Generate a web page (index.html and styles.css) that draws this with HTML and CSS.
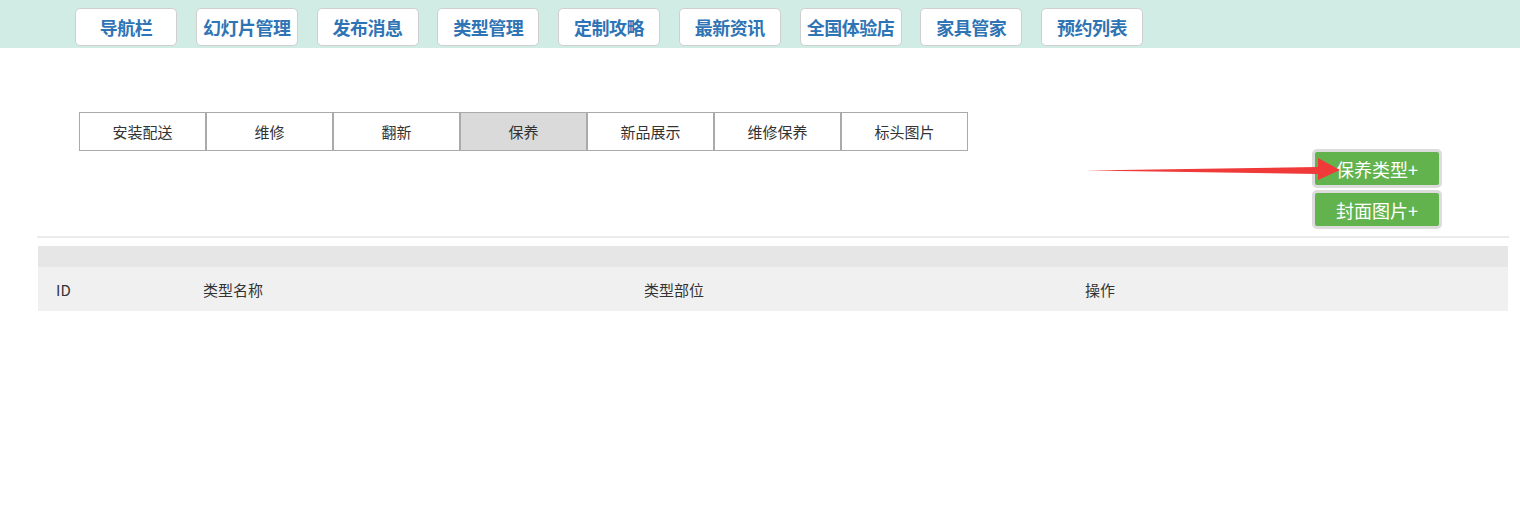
FILE: index.html
```html
<!DOCTYPE html>
<html lang="zh-CN">
<head>
    <meta charset="UTF-8">
    <title>保养类型管理</title>
    <link rel="stylesheet" href="styles.css">
</head>
<body>
    <div class="topbar">
        <a class="nav_btn" href="#">导航栏</a>
        <a class="nav_btn" href="#">幻灯片管理</a>
        <a class="nav_btn" href="#">发布消息</a>
        <a class="nav_btn" href="#">类型管理</a>
        <a class="nav_btn" href="#">定制攻略</a>
        <a class="nav_btn" href="#">最新资讯</a>
        <a class="nav_btn" href="#">全国体验店</a>
        <a class="nav_btn" href="#">家具管家</a>
        <a class="nav_btn" href="#">预约列表</a>
    </div>

    <div class="tabs">
        <a class="tab" href="#">安装配送</a>
        <a class="tab" href="#">维修</a>
        <a class="tab" href="#">翻新</a>
        <a class="tab active" href="#">保养</a>
        <a class="tab" href="#">新品展示</a>
        <a class="tab" href="#">维修保养</a>
        <a class="tab" href="#">标头图片</a>
    </div>

    <div class="actions">
        <button class="green_btn">保养类型+</button>
        <button class="green_btn">封面图片+</button>
        <svg class="arrow" width="260" height="26" viewBox="0 0 260 26">
            <polygon points="0,14.5 232,11 232,2 254,14 232,24 232,18" fill="#f03a3a"/>
        </svg>
    </div>

    <div class="content">
        <div class="line"></div>
        <table class="list">
            <thead>
                <tr><th class="c_id"></th><th class="c_name"></th><th class="c_part"></th><th class="c_op"></th></tr>
            </thead>
            <tbody>
                <tr><td>ID</td><td>类型名称</td><td>类型部位</td><td>操作</td></tr>
            </tbody>
        </table>
    </div>
</body>
</html>
```

FILE: styles.css
```css
*{margin: 0; padding: 0; box-sizing: border-box;}
body{font-family: "Noto Sans CJK SC", "Liberation Sans", sans-serif; color: #333; background: #fff;}
a{text-decoration: none;}

.topbar{height: 48px; background: #d0ece4; display: flex; gap: 18.75px; padding: 8px 0 0 75px;}
.nav_btn{width: 102px; height: 38px; background: #fff; border: 1px solid #cfcfcf; border-radius: 5px; color: #2f74b4; font-size: 18px; font-weight: bold; display: flex; align-items: center; justify-content: center; letter-spacing: -0.5px;}

.tabs{display: flex; margin: 64px 0 0 79px;}
.tab{width: 127px; height: 39px; border: 1px solid #aaa; color: #333; font-size: 15px; display: flex; align-items: center; justify-content: center;}
.tab.active{background: #dadada;}

.actions{position: relative; display: flex; flex-direction: column; align-items: flex-end; gap: 2px; margin: -2px 78px 0 0;}
.green_btn{width: 130px; height: 39px; border: 3px solid #dcdcdc; border-radius: 5px; background: #62b34e; color: #fff; font-family: inherit; font-size: 18px; cursor: pointer;}
.arrow{position: absolute; left: 1086px; top: 7px;}

.content{margin: 7px 11px 0 37px;}
.line{height: 2px; background: #ebebeb;}
.list{width: calc(100% - 2px); margin: 8px 1px 0 1px; border-collapse: collapse; font-size: 15px;}
.list th{height: 21px; background: #e6e6e6;}
.list td{height: 44px; background: #f0f0f0; padding-left: 18px; text-align: left;}
.c_id{width: 10%;}
.c_name, .c_part, .c_op{width: 30%;}
```
